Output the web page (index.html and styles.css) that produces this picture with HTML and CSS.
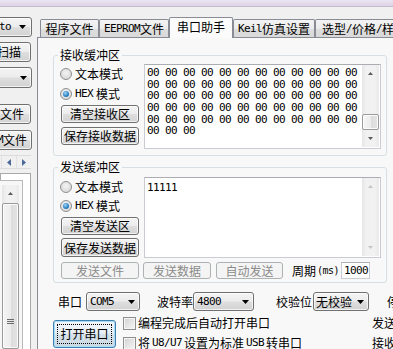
FILE: index.html
```html
<!DOCTYPE html>
<html lang="zh-CN">
<head>
<meta charset="utf-8">
<title>STC-ISP 串口助手</title>
<link rel="stylesheet" href="styles.css">
</head>
<body>
<div class="titlebar"></div>
<div class="main">
  <aside class="side">
    <div class="combo s-combo1"><span class="m">Auto</span><svg class="dd" width="7" height="4" viewBox="0 0 7 4"><path d="M0 0H7L3.5 4Z"/></svg></div>
    <div class="btn s-scan">扫描</div>
    <div class="combo s-combo2"><svg class="dd" width="7" height="4" viewBox="0 0 7 4"><path d="M0 0H7L3.5 4Z"/></svg></div>
    <div class="btn s-f1">打开程序文件</div>
    <div class="btn s-f2">打开<span class="m">EEPROM</span>文件</div>
    <div class="hscroll">
      <span class="harrow"><svg width="4" height="7" viewBox="0 0 4 7"><path d="M4 0V7L0 3.5Z"/></svg></span>
      <span class="harrow"><svg width="4" height="7" viewBox="0 0 4 7"><path d="M0 0V7L4 3.5Z"/></svg></span>
    </div>
    <div class="listbox">
      <div class="list-inner">
        <div class="vscroll side-scroll">
          <div class="sb-btn"><svg width="5" height="3" viewBox="0 0 5 3"><path d="M2.5 0L5 3H0Z"/></svg></div>
          <div class="sb-thumb long"><svg width="7" height="5" viewBox="0 0 7 5"><path d="M0 0.5H7M0 2.5H7M0 4.5H7" stroke="#6b6b6b" stroke-width="1"/></svg></div>
        </div>
      </div>
    </div>
  </aside>

  <section class="work">
    <nav class="tabs">
      <div class="tab t1">程序文件</div>
      <div class="tab t2"><span class="m">EEPROM</span>文件</div>
      <div class="tab active t3">串口助手</div>
      <div class="tab t4"><span class="m">Keil</span>仿真设置</div>
      <div class="tab t5">选型<span class="m">/</span>价格<span class="m">/</span>样品</div>
    </nav>

    <div class="panel">
      <fieldset class="group recv">
        <legend>接收缓冲区</legend>
        <div class="group-body recv-body">
          <div class="opts">
            <label class="radio-row r1"><span class="radio"></span>文本模式</label>
            <label class="radio-row r2"><span class="radio on"></span><span class="m">HEX</span>模式</label>
            <div class="btn b1">清空接收区</div>
            <div class="btn b2">保存接收数据</div>
          </div>
          <div class="textbox recv-box">
            <div class="text hex m">
              <div>00 00 00 00 00 00 00 00 00 00 00 00</div>
              <div>00 00 00 00 00 00 00 00 00 00 00 00</div>
              <div>00 00 00 00 00 00 00 00 00 00 00 00</div>
              <div>00 00 00 00 00 00 00 00 00 00 00 00</div>
              <div>00 00 00 00 00 00 00 00 00 00 00 00</div>
              <div>00 00 00</div>
            </div>
            <div class="vscroll">
              <div class="sb-btn"><svg width="5" height="3" viewBox="0 0 5 3"><path d="M2.5 0L5 3H0Z"/></svg></div>
              <div class="sb-track"><div class="sb-thumb"></div></div>
              <div class="sb-btn"><svg width="5" height="3" viewBox="0 0 5 3"><path d="M0 0H5L2.5 3Z"/></svg></div>
            </div>
          </div>
        </div>
      </fieldset>

      <fieldset class="group send">
        <legend>发送缓冲区</legend>
        <div class="group-body send-body">
          <div class="send-top">
            <div class="opts">
              <label class="radio-row s1"><span class="radio"></span>文本模式</label>
              <label class="radio-row s2"><span class="radio on"></span><span class="m">HEX</span>模式</label>
              <div class="btn b3">清空发送区</div>
              <div class="btn b4">保存发送数据</div>
            </div>
            <div class="textbox send-box">
              <div class="text send-text m">11111</div>
              <div class="vscroll disabled">
                <div class="sb-btn"><svg width="5" height="3" viewBox="0 0 5 3"><path d="M2.5 0L5 3H0Z"/></svg></div>
                <div class="sb-track"></div>
                <div class="sb-btn"><svg width="5" height="3" viewBox="0 0 5 3"><path d="M0 0H5L2.5 3Z"/></svg></div>
              </div>
            </div>
          </div>
          <div class="send-actions">
            <div class="btn dis a1">发送文件</div>
            <div class="btn dis a2">发送数据</div>
            <div class="btn dis a3">自动发送</div>
            <span class="period">周期</span><span class="m ms">(ms)</span>
            <div class="numbox"><span class="m">1000</span></div>
          </div>
        </div>
      </fieldset>

      <div class="port-row">
        <span class="lbl">串口</span>
        <div class="combo c-com"><span class="m">COM5</span><svg class="dd" width="7" height="4" viewBox="0 0 7 4"><path d="M0 0H7L3.5 4Z"/></svg></div>
        <span class="lbl l-baud">波特率</span>
        <div class="combo c-baud"><span class="m">4800</span><svg class="dd" width="7" height="4" viewBox="0 0 7 4"><path d="M0 0H7L3.5 4Z"/></svg></div>
        <span class="lbl l-parity">校验位</span>
        <div class="combo c-parity"><span>无校验</span><svg class="dd" width="7" height="4" viewBox="0 0 7 4"><path d="M0 0H7L3.5 4Z"/></svg></div>
        <span class="lbl l-stop">停止位</span>
      </div>

      <div class="action-row">
        <div class="btn open-btn"><span class="focus">打开串口</span></div>
        <div class="checks">
          <label class="check-row"><span class="checkbox"></span>编程完成后自动打开串口</label>
          <label class="check-row"><span class="checkbox"></span>将<span class="m">U8/U7</span>设置为标准<span class="m">USB</span>转串口</label>
        </div>
        <div class="notes">
          <span class="note">发送缓冲区</span>
          <span class="note">接收缓冲区</span>
        </div>
      </div>
    </div>
  </section>
</div>
</body>
</html>
```

FILE: styles.css
```css
* { box-sizing: border-box; }
html, body { margin: 0; padding: 0; }
body {
  width: 393px;
  height: 349px;
  overflow: hidden;
  background: #f0f0f0;
  font-family: "Noto Sans CJK SC", sans-serif;
  font-size: 12px;
  line-height: 12px;
  color: #000;
}
.m {
  font-family: "DejaVu Sans Mono", monospace;
  font-size: 11px;
  letter-spacing: -0.62px;
}
svg { display: block; flex: none; }
svg path { fill: currentColor; }

.titlebar {
  height: 7px;
  background: linear-gradient(#ebe4f1, #ddd4e7);
  border-bottom: 1px solid #c4bbcf;
}
.main { display: flex; height: 342px; }

/* ---------- generic controls ---------- */
.btn {
  display: flex;
  align-items: center;
  justify-content: center;
  border: 1px solid #707070;
  border-radius: 3px;
  background: linear-gradient(#f4f4f4 0%, #ececec 48%, #dedede 52%, #d2d2d2 100%);
  box-shadow: inset 0 0 0 1px rgba(255,255,255,0.7);
  white-space: nowrap;
  flex: none;
}
.btn.dis {
  border-color: #adb2b5;
  background: #f4f4f4;
  color: #8a8a8a;
  box-shadow: none;
}
.combo {
  display: flex;
  align-items: center;
  justify-content: space-between;
  border: 1px solid #707070;
  border-radius: 3px;
  background: linear-gradient(#f4f4f4 0%, #ececec 48%, #dedede 52%, #d2d2d2 100%);
  box-shadow: inset 0 0 0 1px rgba(255,255,255,0.7);
  padding: 0 4px 0 3px;
  white-space: nowrap;
  flex: none;
  color: #000;
}
.dd { color: #000; }

.radio {
  width: 12px; height: 12px;
  border-radius: 50%;
  border: 1px solid #8e8f8f;
  background: radial-gradient(circle at 50% 40%, #f4f4f4 0%, #dcdcdc 70%, #cfcfcf 100%);
  display: flex; align-items: center; justify-content: center;
  flex: none;
}
.radio.on::after {
  content: "";
  width: 6px; height: 6px;
  border-radius: 50%;
  background: radial-gradient(circle at 40% 35%, #9fd7f7 0%, #2f85c8 55%, #154f80 100%);
}
.checkbox {
  width: 13px; height: 13px;
  border: 1px solid #8e8f8f;
  background: linear-gradient(135deg, #d2d2d2, #f6f6f6);
  box-shadow: inset 0 0 0 1px #f4f4f4;
  flex: none;
}

/* scrollbars */
.vscroll {
  width: 17px;
  flex: none;
  display: flex;
  flex-direction: column;
  background: linear-gradient(90deg, #e6e6e6, #f1f1f1 25%, #f1f1f1 75%, #e9e9e9);
  color: #5a5a5a;
}
.vscroll.disabled { color: #c4c4c4; }
.sb-btn {
  height: 17px;
  flex: none;
  display: flex;
  align-items: center;
  justify-content: center;
}
.sb-track {
  flex: 1;
  display: flex;
  flex-direction: column;
  justify-content: flex-end;
}
.sb-thumb {
  height: 16px;
  border: 1px solid #9a9a9a;
  border-radius: 2px;
  background: linear-gradient(90deg, #f5f5f5, #ececec 50%, #dcdcdc 51%, #e4e4e4);
  box-shadow: inset 0 0 0 1px rgba(255,255,255,0.8);
}

/* ---------- side strip ---------- */
.side {
  width: 37px;
  flex: none;
  display: flex;
  flex-direction: column;
  align-items: flex-end;
  overflow: hidden;
}
.s-combo1 {
  width: 60px; height: 20px;
  margin-top: 10px; margin-right: 5px;
  justify-content: flex-end;
  gap: 8px;
  padding-right: 5px;
}
.s-scan {
  width: 50px; height: 20px;
  margin-top: 5px; margin-right: 6px;
  justify-content: flex-end;
  padding-right: 9px;
}
.s-combo2 {
  width: 60px; height: 21px;
  margin-top: 5px; margin-right: 5px;
  justify-content: flex-end;
  padding-right: 4px;
}
.s-f1 {
  width: 90px; height: 20px;
  margin-top: 16px; margin-right: 6px;
  justify-content: flex-end;
  padding-right: 6px;
}
.s-f2 {
  width: 110px; height: 20px;
  margin-top: 6px; margin-right: 5px;
  justify-content: flex-end;
  padding-right: 4px;
}
.hscroll {
  width: 31px; height: 14px;
  margin-top: 5px; margin-right: 6px;
  display: flex;
  justify-content: flex-end;
  background: #f0f0f0;
  border-top: 1px solid #dcdcdc;
  border-bottom: 1px solid #dcdcdc;
  color: #4b6a98;
}
.harrow {
  width: 15px;
  display: flex;
  align-items: center;
  justify-content: center;
  border-left: 1px solid #e2e2e2;
}
.listbox {
  width: 31px;
  flex: 1;
  margin-top: 4px; margin-right: 6px;
  border: 1px solid #a9a9a9;
  border-bottom: none;
  background: #fff;
  padding-top: 6px;
  padding-right: 7px;
  display: flex;
  justify-content: flex-end;
}
.list-inner {
  width: 40px;
  flex: none;
  border-top: 1px solid #b9b9b9;
  border-right: 1px solid #b9b9b9;
  background: #f7f7f7;
  padding: 4px 3px 0 0;
  display: flex;
  justify-content: flex-end;
}
.side-scroll { height: 100%; }
.sb-thumb.long {
  flex: 1;
  margin-top: 1px;
  height: auto;
  display: flex;
  align-items: center;
  justify-content: center;
  padding-top: 90px;
}

/* ---------- tabs ---------- */
.work {
  flex: 1;
  min-width: 0;
  display: flex;
  flex-direction: column;
}
.tabs {
  height: 30px;
  flex: none;
  display: flex;
  align-items: flex-end;
  padding-left: 3px;
}
.tab {
  height: 18px;
  flex: none;
  display: flex;
  align-items: center;
  justify-content: center;
  white-space: nowrap;
  border: 1px solid #898c95;
  border-bottom: none;
  border-radius: 2px 2px 0 0;
  background: linear-gradient(#f3f3f3 0%, #ebebeb 50%, #dedede 51%, #d9d9d9 100%);
  padding-top: 1px;
}
.tab.active {
  position: relative;
  z-index: 1;
  height: 21px;
  margin-bottom: -1px;
  background: #fbfbfb;
  padding-top: 0;
  padding-bottom: 3px;
}
.t1 { width: 59px; }
.t2 { width: 70px; }
.t3 { width: 64px; }
.t4 { width: 82px; }
.t5 { width: 98px; }

/* ---------- panel ---------- */
.panel {
  flex: 1;
  min-height: 0;
  border-top: 1px solid #898c95;
  border-left: 1px solid #898c95;
  background: #f8f8f8;
  padding: 11px 0 0 15px;
  overflow: hidden;
}
.group {
  width: 334px;
  margin: 0;
  padding: 0;
  min-width: 0;
  border: 1px solid #d5dfe5;
  border-radius: 3px;
}
.group legend {
  margin-left: 4px;
  padding: 0 2px;
  line-height: 12px;
  height: 12px;
}
.send { margin-top: 5px; }

.group-body { padding: 0 5px 0 7px; }
.recv-body {
  display: flex;
  gap: 5px;
  padding-top: 3px;
  padding-bottom: 6px;
}
.send-body {
  padding-top: 4px;
  padding-bottom: 3px;
}
.send-top { display: flex; gap: 5px; }

.opts {
  width: 78px;
  flex: none;
  display: flex;
  flex-direction: column;
}
.radio-row {
  display: flex;
  align-items: center;
  gap: 3px;
  margin-left: -1px;
  white-space: nowrap;
}
.r1 { height: 20px; }
.r2 { height: 19px; }
.s1 { height: 19px; }
.s2 { height: 20px; }
.b1 { height: 18px; margin-top: 2px; }
.b2 { height: 18px; margin-top: 4px; }
.b3 { height: 18px; margin-top: 1px; }
.b4 { height: 19px; margin-top: 3px; }

.textbox {
  width: 237px;
  flex: none;
  display: flex;
  background: #fff;
  border: 1px solid #c9ccd2;
  border-top-color: #abadb3;
  padding: 0 1px 1px 0;
}
.recv-box { height: 85px; }
.send-box { height: 81px; }
.text {
  flex: 1;
  min-width: 0;
  padding: 2px 0 0 2px;
  white-space: nowrap;
  overflow: hidden;
}
.hex { line-height: 11.67px; }
.send-text { line-height: 12px; padding-top: 4px; }

.send-actions {
  height: 17px;
  margin-top: 4px;
  display: flex;
  align-items: center;
}
.a1 { width: 78px; height: 17px; }
.a2 { width: 68px; height: 17px; margin-left: 4px; }
.a3 { width: 67px; height: 17px; margin-left: 5px; }
.period { margin-left: 9px; white-space: nowrap; }
.ms { font-size: 10px; letter-spacing: -0.5px; margin-left: 1px; }
.numbox {
  width: 29px; height: 17px;
  margin-left: 2px;
  background: #fff;
  border: 1px solid #c9ccd2;
  border-top-color: #abadb3;
  display: flex;
  align-items: center;
  padding-left: 2px;
}

/* ---------- port options ---------- */
.port-row {
  height: 19px;
  margin-top: 9px;
  margin-left: 5px;
  display: flex;
  align-items: center;
  white-space: nowrap;
}
.lbl { flex: none; }
.c-com { width: 54px; height: 19px; margin-left: 4px; }
.l-baud { margin-left: 17px; }
.c-baud { width: 61px; height: 19px; margin-left: 0; }
.l-parity { margin-left: 22px; }
.c-parity { width: 56px; height: 19px; margin-left: 1px; padding-left: 2px; }
.l-stop { margin-left: 18px; }

.action-row {
  margin-top: 5px;
  display: flex;
  white-space: nowrap;
}
.open-btn {
  width: 63px; height: 28px;
  margin-top: 4px;
  border-color: #3c7fb1;
  background: linear-gradient(#f2f7fb 0%, #e6eef4 48%, #d6e2ea 52%, #cbd9e3 100%);
  box-shadow: inset 0 0 0 1px #a9dcf6;
  padding: 3px;
}
.focus {
  flex: 1;
  align-self: stretch;
  display: flex;
  align-items: center;
  justify-content: center;
  outline: 1px dotted #000;
  outline-offset: -1px;
}
.checks {
  width: 249px;
  flex: none;
  margin-left: 7px;
  display: flex;
  flex-direction: column;
}
.check-row {
  height: 20px;
  display: flex;
  align-items: flex-start;
  gap: 2px;
  line-height: 14px;
}
.check-row .checkbox { margin-top: 1px; }
.notes {
  display: flex;
  flex-direction: column;
  flex: none;
}
.note {
  height: 20px;
  line-height: 14px;
}
```
